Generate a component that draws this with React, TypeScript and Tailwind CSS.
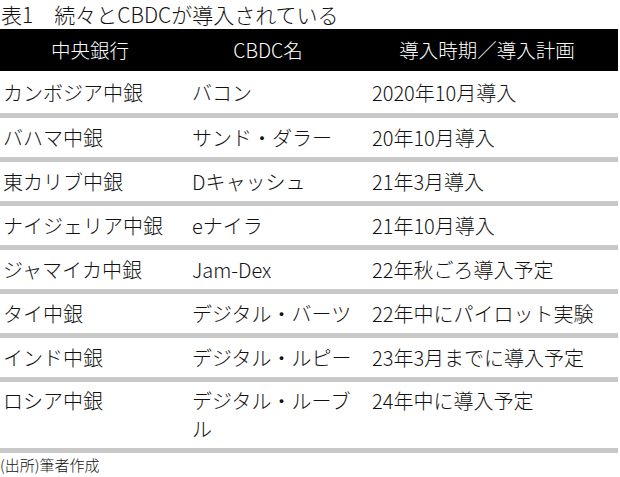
import React from 'react';

const rows = [
  { bank: 'カンボジア中銀', name: 'バコン', plan: '2020年10月導入' },
  { bank: 'バハマ中銀', name: 'サンド・ダラー', plan: '20年10月導入' },
  { bank: '東カリブ中銀', name: 'Dキャッシュ', plan: '21年3月導入' },
  { bank: 'ナイジェリア中銀', name: 'eナイラ', plan: '21年10月導入' },
  { bank: 'ジャマイカ中銀', name: 'Jam-Dex', plan: '22年秋ごろ導入予定' },
  { bank: 'タイ中銀', name: 'デジタル・バーツ', plan: '22年中にパイロット実験' },
  { bank: 'インド中銀', name: 'デジタル・ルピー', plan: '23年3月までに導入予定' },
  { bank: 'ロシア中銀', name: 'デジタル・ルーブル', plan: '24年中に導入予定' },
];

const App = () => {
  return (
    <div
      className="w-[620px] h-[477px] bg-white text-[#111] overflow-hidden font-light"
      style={{ fontFamily: '"Noto Sans CJK JP", "Noto Sans", sans-serif' }}
    >
      {/* Title */}
      <h1 className="text-[21px] leading-[28px] pl-[1px] font-light whitespace-pre">
        表1　続々とCBDCが導入されている
      </h1>

      {/* Table */}
      <div className="w-[618px] mt-[1px]">
        <div className="grid grid-cols-[180px_176px_1fr] h-[42px] bg-black text-white text-[19.5px] items-center">
          <div className="text-center">中央銀行</div>
          <div className="text-center">CBDC名</div>
          <div className="text-center">導入時期／導入計画</div>
        </div>

        {rows.map((row, index) => (
          <div
            key={index}
            className={
              'grid grid-cols-[180px_176px_1fr] text-[20px] leading-[28px] ' +
              (index === 0 ? 'h-[42px] items-center pt-[2px]' : 'border-t-[5px] border-[#c8c8c8] ') +
              (index === rows.length - 1 ? 'py-[5px] items-start' : index > 0 ? 'h-[44px] items-center pt-[1px]' : '')
            }
          >
            <div className="pl-[3px] whitespace-nowrap">{row.bank}</div>
            <div className="pl-[12px]">{row.name}</div>
            <div className="pl-[16px] whitespace-nowrap">{row.plan}</div>
          </div>
        ))}
        <div className="h-[5px] bg-[#c8c8c8]"></div>
      </div>

      {/* Source */}
      <p className="text-[15px] leading-[22px] mt-[1px]">(出所)筆者作成</p>
    </div>
  );
};

export default App;
